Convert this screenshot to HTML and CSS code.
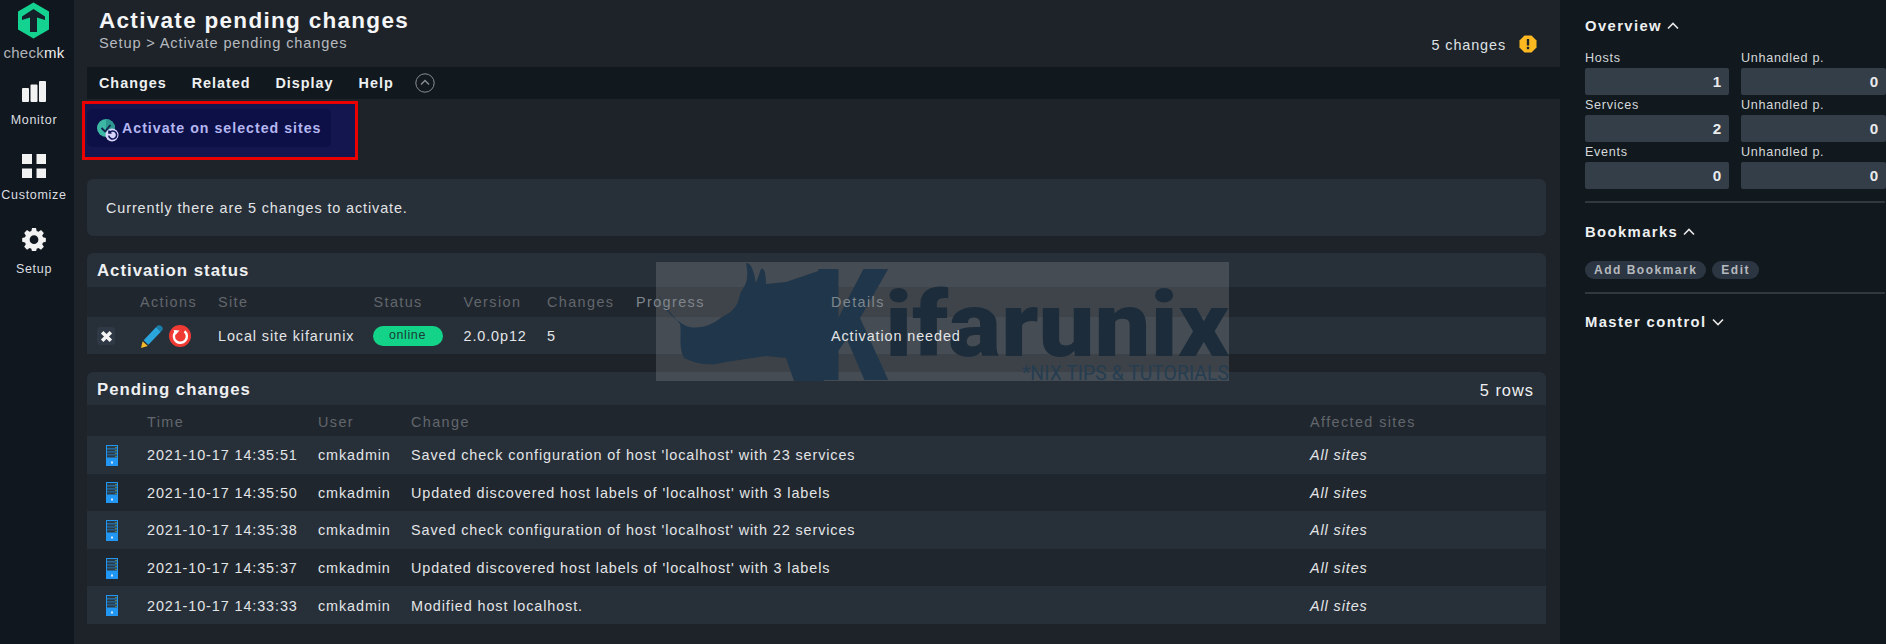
FILE: index.html
```html
<!DOCTYPE html>
<html lang="en">
<head>
<meta charset="utf-8">
<title>Activate pending changes</title>
<link rel="stylesheet" href="styles.css">
</head>
<body>
<nav class="side">
  <div class="logo">
    <svg class="logo-svg" viewBox="0 0 32 37"><path class="hex" d="M15.5 0.5 31 9.5V27.5L15.5 36.5 0 27.5V9.5Z"/><path class="hex-in" d="M15.5 7 27 14.5V18L19 15.5V30H12V15.5L4 18V14.5Z"/></svg>
    <div class="logo-text">check<span>mk</span></div>
  </div>
  <a class="nav-item nav-monitor">
    <svg class="nav-icon" viewBox="0 0 24 24"><rect x="0" y="8" width="7" height="14" rx="1"/><rect x="8.500" y="4.500" width="7" height="17.500" rx="1"/><rect x="17" y="1" width="7" height="21" rx="1"/></svg>
    <span>Monitor</span>
  </a>
  <a class="nav-item nav-customize">
    <svg class="nav-icon" viewBox="0 0 24 24"><rect x="0" y="0" width="10" height="10"/><rect x="14.500" y="0" width="9.500" height="10"/><rect x="0" y="14.500" width="10" height="9.500"/><rect x="14.500" y="14.500" width="9.500" height="9.500"/></svg>
    <span>Customize</span>
  </a>
  <a class="nav-item nav-setup">
    <svg class="nav-icon" viewBox="0 0 24 24"><path fill-rule="evenodd" d="M9.800 0h4.400l.7 3.200 2 .9 2.800-1.800 3.100 3.100-1.800 2.800.9 2 3.100.7v4.300l-3.100.7-.9 2 1.800 2.800-3.100 3.100-2.800-1.800-2 .9-.7 3.100H9.800l-.7-3.100-2-.9-2.800 1.800-3.100-3.100L3 17.900l-.9-2L-1 15.200v-4.300l3.100-.7.9-2L1.200 5.400l3.100-3.100 2.800 1.800 2-.9zM12 8a4.800 4.800 0 1 0 0 9.600A4.800 4.800 0 0 0 12 8z" transform="translate(1.100 1) scale(.91)"/></svg>
    <span>Setup</span>
  </a>
</nav>

<main class="main">
  <header class="page-head">
    <div class="titles">
      <h1>Activate pending changes</h1>
      <div class="crumb">Setup &gt; Activate pending changes</div>
    </div>
    <div class="changes-note">
      <span>5 changes</span>
      <svg class="warn" viewBox="0 0 18 18"><path class="warn-bg" d="M5.500 .5h7l5 5v7l-5 5h-7l-5-5v-7z"/><rect class="warn-in" x="7.800" y="4" width="2.400" height="6.500"/><rect class="warn-in" x="7.800" y="11.800" width="2.400" height="2.400"/></svg>
    </div>
  </header>

  <div class="menubar">
    <span>Changes</span><span>Related</span><span>Display</span><span>Help</span>
    <svg class="collapse" viewBox="0 0 20 20"><circle cx="10" cy="10" r="9.200"/><path d="M6 11.500 10 7.500 14 11.500"/></svg>
  </div>

  <div class="toolbar">
    <div class="highlight">
      <button class="activate">
        <svg class="activate-icon" viewBox="0 0 24 24"><circle class="ai-a" cx="9" cy="9" r="9"/><path class="ai-b" d="M9 0a9 9 0 0 1 0 18z"/><path class="ai-c" d="M4.500 9 8 12.500 13.500 6"/><circle class="ai-d" cx="15" cy="16" r="6.500"/><path class="ai-e" d="M12.500 13.500a4 4 0 1 1-.8 3.200M12 11.500v2.500h2.500"/></svg>
        Activate on selected sites
      </button>
    </div>
  </div>

  <section class="info">Currently there are 5 changes to activate.</section>

  <section class="card card-status">
    <h2 class="card-title">Activation status</h2>
    <table class="grid status-table">
      <colgroup><col class="s1"><col class="s2"><col class="s3"><col class="s4"><col class="s5"><col class="s6"><col class="s7"><col></colgroup>
      <thead><tr><th></th><th>Actions</th><th>Site</th><th>Status</th><th>Version</th><th>Changes</th><th class="hazed">Progress</th><th class="hazed">Details</th></tr></thead>
      <tbody><tr>
        <td class="cell-x"><span class="xbtn"><svg viewBox="0 0 12 12"><path d="M2 2 10 10M10 2 2 10"/></svg></span></td>
        <td class="cell-actions">
          <svg class="pencil" viewBox="0 0 21 22"><path class="p-tip" d="M0 22 1.500 15.500 6.500 20Z"/><path class="p-body" d="M2.500 14.500 14.500 2 19 6.500 7 19Z"/><path class="p-top" d="M14.500 2 16 .5C17 0 18 0 19 .7L20.300 2C21 3 21 4 20.300 5L19 6.500Z"/></svg>
          <svg class="restart" viewBox="0 0 22 22"><circle class="r-bg" cx="11" cy="11" r="11"/><path class="r-arc" d="M6.500 7A6.500 6.500 0 1 0 15.500 6.300"/><path class="r-head" d="M4.500 5 10.500 5.500 6.500 10Z"/></svg>
        </td>
        <td>Local site kifarunix</td>
        <td><span class="pill">online</span></td>
        <td>2.0.0p12</td>
        <td>5</td>
        <td></td>
        <td>Activation needed</td>
      </tr></tbody>
    </table>
  </section>

  <section class="card card-pending">
    <div class="card-title pending-title"><h2>Pending changes</h2><span>5 rows</span></div>
    <table class="grid pending-table">
      <colgroup><col class="p1"><col class="p2"><col class="p3"><col class="p4"><col></colgroup>
      <thead><tr><th></th><th>Time</th><th>User</th><th>Change</th><th>Affected sites</th></tr></thead>
      <tbody>
        <tr><td class="cell-srv"><svg class="srv" viewBox="0 0 12 21"><use href="#server"/></svg></td><td>2021-10-17 14:35:51</td><td>cmkadmin</td><td>Saved check configuration of host 'localhost' with 23 services</td><td class="sites">All sites</td></tr>
        <tr><td class="cell-srv"><svg class="srv" viewBox="0 0 12 21"><use href="#server"/></svg></td><td>2021-10-17 14:35:50</td><td>cmkadmin</td><td>Updated discovered host labels of 'localhost' with 3 labels</td><td class="sites">All sites</td></tr>
        <tr><td class="cell-srv"><svg class="srv" viewBox="0 0 12 21"><use href="#server"/></svg></td><td>2021-10-17 14:35:38</td><td>cmkadmin</td><td>Saved check configuration of host 'localhost' with 22 services</td><td class="sites">All sites</td></tr>
        <tr><td class="cell-srv"><svg class="srv" viewBox="0 0 12 21"><use href="#server"/></svg></td><td>2021-10-17 14:35:37</td><td>cmkadmin</td><td>Updated discovered host labels of 'localhost' with 3 labels</td><td class="sites">All sites</td></tr>
        <tr><td class="cell-srv"><svg class="srv" viewBox="0 0 12 21"><use href="#server"/></svg></td><td>2021-10-17 14:33:33</td><td>cmkadmin</td><td>Modified host localhost.</td><td class="sites">All sites</td></tr>
      </tbody>
    </table>
  </section>

  <div class="watermark" aria-hidden="true">
    <svg viewBox="0 0 573 119" class="wm-svg">
      <path class="wm-rhino" d="M0 25C6 45 14 55 30 64 42 68 55 64 66 55 76 50 82 45 84 32 88 24 94 20 90 1 93 1 97 3 100 21L105 7C108 6 110 10 110 22L130 20 168 7V119H138L130 96 110 94 70 100C55 104 42 103 28 96 22 85 26 70 24 62 14 50 4 40 0 25Z"/>
      <text class="wm-k" x="156" y="118" textLength="75" lengthAdjust="spacingAndGlyphs">K</text>
      <text class="wm-name" x="229" y="94" textLength="344" lengthAdjust="spacingAndGlyphs">ifarunix</text>
      <text class="wm-tag" x="366" y="118" textLength="207" lengthAdjust="spacingAndGlyphs">*NIX TIPS &amp; TUTORIALS</text>
    </svg>
  </div>
</main>

<aside class="panel">
  <h3 class="panel-head">Overview <svg class="chev" viewBox="0 0 12 8"><path d="M1 6.500 6 1.500 11 6.500"/></svg></h3>
  <div class="stats">
    <div class="stat"><label>Hosts</label><b>1</b></div>
    <div class="stat"><label>Unhandled p.</label><b>0</b></div>
    <div class="stat"><label>Services</label><b>2</b></div>
    <div class="stat"><label>Unhandled p.</label><b>0</b></div>
    <div class="stat"><label>Events</label><b>0</b></div>
    <div class="stat"><label>Unhandled p.</label><b>0</b></div>
  </div>
  <hr class="rule rule-a">
  <h3 class="panel-head bm-head">Bookmarks <svg class="chev" viewBox="0 0 12 8"><path d="M1 6.500 6 1.500 11 6.500"/></svg></h3>
  <div class="pills"><span>Add Bookmark</span><span>Edit</span></div>
  <hr class="rule rule-b">
  <h3 class="panel-head mc-head">Master control <svg class="chev" viewBox="0 0 12 8"><path d="M1 1.500 6 6.500 11 1.500"/></svg></h3>
</aside>

<svg class="defs" width="0" height="0">
  <defs>
    <g id="server">
      <rect width="12" height="21" fill="#2196f3"/>
      <rect x="1" y="1" width="10" height="2.500" fill="#2c3a44"/>
      <rect x="1" y="4.300" width="10" height="2.300" fill="#2c3a44"/>
      <rect x="1" y="7.300" width="10" height="2.300" fill="#2c3a44"/>
      <rect x="1" y="10.200" width="10" height="2.300" fill="#2c3a44"/>
      <rect x="9.500" y="2" width="1" height="1" fill="#9ccc50"/>
      <rect x="9.500" y="5" width="1" height="1" fill="#9ccc50"/>
      <rect x="9.500" y="8" width="1" height="1" fill="#9ccc50"/>
      <rect x="9.500" y="11" width="1" height="1" fill="#9ccc50"/>
      <rect x="5" y="16.500" width="2" height="2" fill="#cfe8fb"/>
    </g>
  </defs>
</svg>
</body>
</html>
```
FILE: styles.css
```css
* { box-sizing: border-box; }
html, body { height: 100%; }
body {
  margin: 0;
  display: flex;
  overflow: hidden;
  background: #1e232a;
  color: #e6e8ea;
  font-family: "Liberation Sans", Arial, sans-serif;
  font-size: 14.4px;
  letter-spacing: .9px;
}
.defs { position: absolute; }

/* left navigation */
.side {
  flex: 0 0 74px;
  background: #10171e;
  display: flex;
  flex-direction: column;
  align-items: center;
  padding-right: 6px;
}
.logo { display: flex; flex-direction: column; align-items: center; padding-top: 2px; }
.logo-svg { width: 32px; height: 37px; display: block; }
.hex { fill: #14d28f; }
.hex-in { fill: #15202a; }
.logo-text { font-size: 15px; line-height: 18px; letter-spacing: .25px; margin-top: 5px; color: #b0b5b9; }
.logo-text span { color: #f0f0f0; }
.nav-item { display: flex; flex-direction: column; align-items: center; color: #dcdee0; font-size: 12.500px; line-height: 16px; letter-spacing: .7px; }
.nav-icon { width: 24px; height: 24px; fill: #f2f2f2; display: block; margin-bottom: 8px; }
.nav-monitor { margin-top: 18px; }
.nav-customize { margin-top: 26px; }
.nav-setup { margin-top: 24px; }
.nav-setup .nav-icon { margin-bottom: 10px; }
.nav-customize .nav-icon { margin-bottom: 9px; }

/* main column */
.main { flex: 1 1 auto; position: relative; min-width: 0; }
.page-head { height: 67px; display: flex; justify-content: space-between; padding: 8px 23px 0 25px; }
h1 { margin: 0; font-size: 22.500px; line-height: 26px; font-weight: 700; letter-spacing: 1.3px; color: #f4f5f6; }
.crumb { font-size: 14.600px; line-height: 17px; letter-spacing: .85px; color: #b6babe; margin-top: 1px; }
.changes-note { display: flex; align-items: center; gap: 13px; height: 26px; margin-top: 24px; font-size: 14.4px; color: #dfe1e3; }
.warn { width: 18px; height: 18px; margin-top: -3px; }
.warn-bg { fill: #fdb91f; }
.warn-in { fill: #1e232a; }

.menubar {
  height: 32px;
  margin-left: 13px;
  background: #11181e;
  display: flex;
  align-items: center;
  padding-left: 12px;
  gap: 25px;
  font-weight: 700;
  font-size: 14.4px;
  letter-spacing: .98px;
  color: #eef0f1;
}
.collapse { width: 20px; height: 20px; margin-left: -4px; fill: none; stroke: #8a8f93; stroke-width: 1; }
.collapse path { stroke-width: 1.4; }

.toolbar { padding: 2px 0 0 8px; height: 80px; }
.highlight { width: 276px; height: 59px; border: 3px solid #ea0000; background: #13164f; padding: 5px 0 0 2px; }
.activate {
  width: 244px;
  height: 38px;
  border: 0;
  border-radius: 5px;
  background: #0d1047;
  color: #b4b6f0;
  font: 700 14.200px "Liberation Sans", Arial, sans-serif;
  letter-spacing: 1px;
  display: flex;
  align-items: center;
  gap: 1px;
  padding: 0 0 0 10px;
}
.activate-icon { width: 24px; height: 24px; flex: none; margin-top: 6px; }
.ai-a { fill: #3cb8a4; }
.ai-b { fill: #2d968f; }
.ai-c { fill: none; stroke: #12204a; stroke-width: 1.800; }
.ai-d { fill: #d8d6fb; }
.ai-e { fill: none; stroke: #14185a; stroke-width: 1.600; }

.info {
  height: 57px;
  margin: 0 14px 17px 13px;
  padding-left: 19px;
  display: flex;
  align-items: center;
  background: #272f39;
  border-radius: 6px;
  color: #e2e4e6;
}

.card { margin: 0 14px 0 13px; border-radius: 6px 6px 0 0; background: #272f39; }
.card-status { margin-bottom: 18px; }
.card-title {
  margin: 0;
  height: 34px;
  padding: 1px 0 0 10px;
  font-size: 16.800px;
  line-height: 34px;
  font-weight: 700;
  letter-spacing: 1px;
  color: #eef0f1;
}
.pending-title { height: 33px; display: flex; justify-content: space-between; padding-right: 12px; }
.pending-title h2 { margin: 0; font: inherit; letter-spacing: inherit; }
.pending-title span { font-weight: 400; font-size: 16.400px; }

.grid { width: 100%; border-collapse: collapse; table-layout: fixed; }
.grid thead tr { background: #20262d; }
.grid th {
  padding: 0;
  text-align: left;
  font-weight: 400;
  color: #62676e;
  font-size: 14.4px;
  letter-spacing: 1.4px;
}
.grid th, .grid td { position: relative; z-index: 2; white-space: nowrap; }
.grid td { padding: 1px 0 0; color: #e3e5e7; }
.grid th.hazed { color: #7f868d; }
.status-table th { height: 30px; }
.status-table tbody tr { height: 37px; background: #272f39; }
.s1 { width: 53px; } .s2 { width: 78px; } .s3 { width: 155.500px; } .s4 { width: 90px; }
.s5 { width: 83.500px; } .s6 { width: 89px; } .s7 { width: 195px; }
.p1 { width: 60px; } .p2 { width: 171px; } .p3 { width: 93px; } .p4 { width: 899px; }

.grid .cell-x { padding-left: 10px; }
.xbtn { width: 18px; height: 18px; border-radius: 3px; background: #2f3845; display: flex; align-items: center; justify-content: center; }
.xbtn svg { width: 13px; height: 13px; fill: none; stroke: #f4f4f4; stroke-width: 3.200; }
.cell-actions { font-size: 0; }
.pencil { width: 22px; height: 23px; vertical-align: middle; margin: 0 5px 0 1px; }
.p-tip { fill: #f4b92c; }
.p-body { fill: #2aa6dc; }
.p-top { fill: #1a7ea8; }
.restart { width: 22px; height: 22px; vertical-align: middle; }
.r-bg { fill: #ef3b33; }
.r-arc { fill: none; stroke: #fff; stroke-width: 2.400; }
.r-head { fill: #fff; }
.pill {
  display: block;
  width: 70px;
  height: 20px;
  margin-left: -1px;
  border-radius: 10px;
  background: #13d389;
  color: #1c3a36;
  text-align: center;
  font-size: 12.500px;
  line-height: 19px;
  letter-spacing: .6px;
}

.pending-table th { height: 31px; padding-top: 3px; }
.pending-table tbody tr:nth-child(odd) { background: #272f39; }
.pending-table tbody tr:nth-child(even) { background: #20262d; }
.pending-table tbody tr { height: 37.600px; }
.grid .cell-srv { padding-left: 19px; font-size: 0; }
.srv { width: 12px; height: 21px; vertical-align: middle; }
.sites { font-style: italic; }

/* watermark image lying across both cards */
.watermark {
  position: absolute;
  left: 582px;
  top: 262px;
  width: 573px;
  height: 119px;
  z-index: 1;
  background: rgba(255, 255, 255, .14);
}
.wm-svg { width: 573px; height: 119px; display: block; }
.wm-rhino { fill: #20364a; }
.wm-k { fill: #20364a; font: 900 155px Roboto, sans-serif; letter-spacing: 0; }
.wm-name { fill: #1c2c3a; font: 900 91px Roboto, sans-serif; letter-spacing: 0; }
.wm-tag { fill: #263d50; font: 400 21px Roboto, sans-serif; letter-spacing: 0; }

/* right snap-in panel */
.panel { flex: 0 0 326px; background: #11181e; padding-left: 25px; }
.panel-head {
  margin: 0;
  font-size: 14.8px;
  line-height: 18px;
  font-weight: 700;
  letter-spacing: 1.400px;
  color: #eef0f1;
  display: flex;
  align-items: center;
  gap: 5px;
  padding-top: 17px;
}
.chev { width: 12px; height: 8px; fill: none; stroke: #e8e8e8; stroke-width: 1.600; }
.stats { display: grid; grid-template-columns: 144px 145px; column-gap: 12px; margin-top: 13px; }
.stat label { display: block; height: 20px; font-size: 12.600px; line-height: 20px; letter-spacing: .7px; color: #d6d8da; }
.stat b {
  display: block;
  height: 27px;
  padding-right: 7px;
  background: #343e48;
  border-radius: 2px;
  text-align: right;
  font-size: 15.200px;
  line-height: 27px;
  color: #e8eaec;
}
.rule { margin: 0; width: 300px; height: 2px; border: 0; background: #32383d; }
.rule-a { margin-top: 12px; }
.bm-head { padding-top: 20px; }
.mc-head { padding-top: 19px; }
.pills { display: flex; gap: 6px; margin-top: 20px; }
.pills span {
  height: 18px;
  padding: 0 9px;
  border-radius: 9px;
  background: #2c3643;
  font-size: 12px;
  line-height: 18px;
  font-weight: 700;
  letter-spacing: 1.500px;
  color: #b6b9bd;
}
.rule-b { margin-top: 13px; }
```
